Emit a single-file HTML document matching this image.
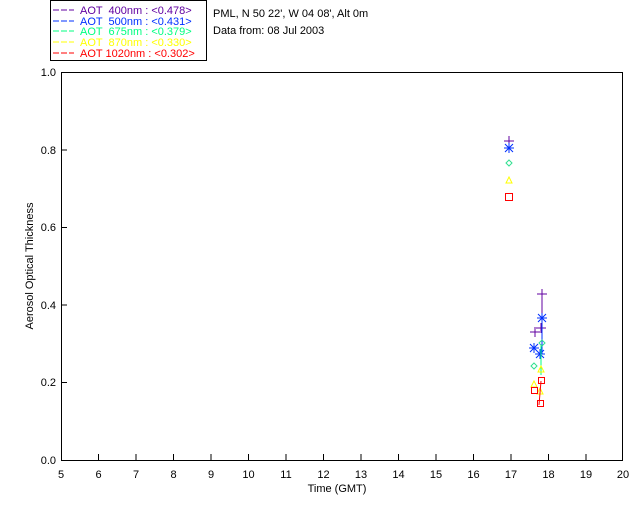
<!DOCTYPE html>
<html><head><style>
body{margin:0;background:#fff;width:640px;height:512px;overflow:hidden;font-family:"Liberation Sans",sans-serif}
text{font-family:"Liberation Sans",sans-serif;font-size:11px;white-space:pre}
</style></head><body>
<svg width="640" height="512" xmlns="http://www.w3.org/2000/svg" xml:space="preserve">
<rect x="50.5" y="0.5" width="156" height="60" fill="#fff" stroke="#000"/>
<g font-size="11">
<line x1="53" y1="10" x2="74" y2="10" stroke="#6000a0" stroke-dasharray="6,2"/><text x="80" y="14" fill="#6000a0">AOT  400nm : &lt;0.478&gt;</text>
<line x1="53" y1="21" x2="74" y2="21" stroke="#0030ff" stroke-dasharray="6,2"/><text x="80" y="25" fill="#0030ff">AOT  500nm : &lt;0.431&gt;</text>
<line x1="53" y1="31" x2="74" y2="31" stroke="#00ff80" stroke-dasharray="6,2"/><text x="80" y="35" fill="#00ff80">AOT  675nm : &lt;0.379&gt;</text>
<line x1="53" y1="42" x2="74" y2="42" stroke="#ffff00" stroke-dasharray="6,2"/><text x="80" y="46" fill="#ffff00">AOT  870nm : &lt;0.330&gt;</text>
<line x1="53" y1="53" x2="74" y2="53" stroke="#ff0000" stroke-dasharray="6,2"/><text x="80" y="57" fill="#ff0000">AOT 1020nm : &lt;0.302&gt;</text>
</g>
<text x="213" y="17">PML, N 50 22', W 04 08', Alt 0m</text>
<text x="213" y="34">Data from: 08 Jul 2003</text>
<rect x="61.5" y="72.5" width="561" height="388" fill="none" stroke="#000"/>
<g stroke="#000">
<line x1="98.5" y1="460" x2="98.5" y2="454"/><line x1="136" y1="460" x2="136" y2="454"/><line x1="173.5" y1="460" x2="173.5" y2="454"/><line x1="211" y1="460" x2="211" y2="454"/><line x1="248.5" y1="460" x2="248.5" y2="454"/><line x1="286" y1="460" x2="286" y2="454"/><line x1="323.5" y1="460" x2="323.5" y2="454"/><line x1="361" y1="460" x2="361" y2="454"/><line x1="398.5" y1="460" x2="398.5" y2="454"/><line x1="436" y1="460" x2="436" y2="454"/><line x1="473.5" y1="460" x2="473.5" y2="454"/><line x1="511" y1="460" x2="511" y2="454"/><line x1="548.5" y1="460" x2="548.5" y2="454"/><line x1="586" y1="460" x2="586" y2="454"/>
<line x1="61" y1="382.5" x2="67" y2="382.5"/><line x1="61" y1="305" x2="67" y2="305"/><line x1="61" y1="227.5" x2="67" y2="227.5"/><line x1="61" y1="150" x2="67" y2="150"/>
</g>
<g text-anchor="middle" font-size="10.5">
<text x="61" y="478">5</text><text x="98.5" y="478">6</text><text x="136" y="478">7</text><text x="173.5" y="478">8</text><text x="211" y="478">9</text><text x="248.5" y="478">10</text><text x="286" y="478">11</text><text x="323.5" y="478">12</text><text x="361" y="478">13</text><text x="398.5" y="478">14</text><text x="436" y="478">15</text><text x="473.5" y="478">16</text><text x="511" y="478">17</text><text x="548.5" y="478">18</text><text x="586" y="478">19</text><text x="623" y="478">20</text>
<text x="337" y="492">Time (GMT)</text>
</g>
<g text-anchor="end" font-size="10.5">
<text x="56" y="464">0.0</text><text x="56" y="386">0.2</text><text x="56" y="309">0.4</text><text x="56" y="231">0.6</text><text x="56" y="154">0.8</text><text x="56" y="76">1.0</text>
</g>
<text transform="translate(33,266) rotate(-90)" text-anchor="middle" font-size="10">Aerosol Optical Thickness</text>
<g stroke-width="1" fill="none">
<path d="M504 141h10M509 136v10" stroke="#6000a0"/>
<path d="M504 148h10M509 143v10M505 144l8 8M513 144l-8 8" stroke="#0030ff"/>
<path d="M509 160l3 3-3 3-3-3z" stroke="#30e090"/>
<path d="M509 177l3 6h-6z" stroke="#ffff00"/>
<path d="M505.5 193.5h7v7h-7z" stroke="#ff0000"/>
<path d="M542 294v40" stroke="#6000a0"/>
<path d="M537 294h10M542 289v10M530 332h10M535 327v10M536 328h10M541 323v10" stroke="#6000a0"/>
<path d="M542 318v36" stroke="#0030ff"/>
<path d="M537 318h10M542 313v10M538 314l8 8M546 314l-8 8M529 348h10M534 343v10M530 344l8 8M538 344l-8 8M535 354h10M540 349v10M536 350l8 8M544 350l-8 8" stroke="#0030ff"/>
<path d="M541 345v30" stroke="#00ff80"/>
<path d="M542 340l3 3-3 3-3-3zM534 363l3 3-3 3-3-3z" stroke="#30e090"/>
<path d="M541 366l3 6h-6zM534 381l3 6h-6zM540 388l3 6h-6z" stroke="#ffff00"/>
<path d="M541 381l-2 24" stroke="#ff0000"/>
<path d="M538.5 377.5h6v6h-6zM531.5 387.5h6v6h-6zM537.5 400.5h6v6h-6z" stroke="#ff0000"/>
</g>
</svg>
</body></html>
